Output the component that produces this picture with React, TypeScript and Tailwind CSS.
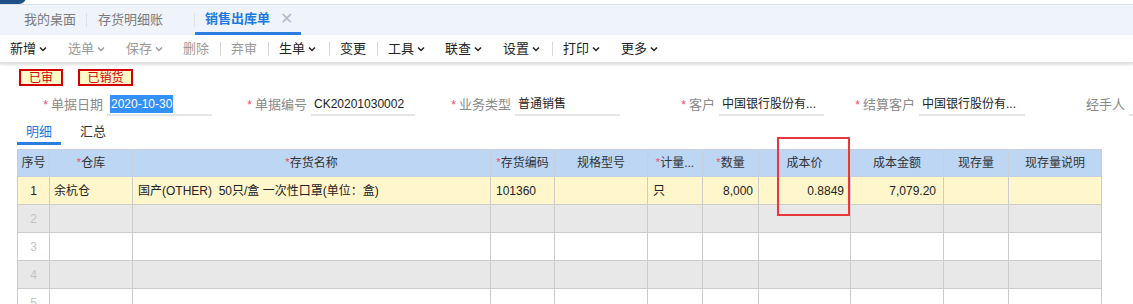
import React from 'react';

const FONT = { fontFamily: '"Liberation Sans", "Noto Sans CJK SC", sans-serif' };

const Chevron = () => (
  <svg width="8" height="6" viewBox="0 0 8 6" className="ml-[3px] mt-[1px]">
    <path d="M1 1.5 L4 4.5 L7 1.5" fill="none" stroke="currentColor" strokeWidth="1.5" />
  </svg>
);

type ToolItem = { label: string; drop?: boolean; dim?: boolean; sep?: boolean; w: string };

const tools: ToolItem[] = [
  { label: '新增', drop: true, w: 'w-[58px]' },
  { label: '选单', drop: true, dim: true, w: 'w-[58px]' },
  { label: '保存', drop: true, dim: true, w: 'w-[57px]' },
  { label: '删除', dim: true, sep: true, w: 'w-[48px]' },
  { label: '弃审', dim: true, sep: true, w: 'w-[48px]' },
  { label: '生单', drop: true, sep: true, w: 'w-[61px]' },
  { label: '变更', sep: true, w: 'w-[48px]' },
  { label: '工具', drop: true, w: 'w-[57px]' },
  { label: '联查', drop: true, w: 'w-[58px]' },
  { label: '设置', drop: true, sep: true, w: 'w-[60px]' },
  { label: '打印', drop: true, w: 'w-[58px]' },
  { label: '更多', drop: true, w: 'w-[58px]' },
];

const Field = ({ label, value, labelW, inputW, req = true, selected = false }: {
  label: string; value: string; labelW: string; inputW: string; req?: boolean; selected?: boolean;
}) => (
  <div className="flex items-center">
    <div className={`flex justify-end items-center ${labelW} text-[13px] text-[#8a8a8a]`}>
      {req && <span className="text-[#f2476b] text-[12px] mr-[3px]">*</span>}
      {label}
    </div>
    <div className={`${inputW} ml-[4px] h-[22px] border-b-2 border-[#e6e6e6] flex items-center pl-[3px] text-[12px] text-[#222] overflow-hidden whitespace-nowrap`}>
      {selected ? <span className="bg-[#3390ff] text-white px-[1px]">{value}</span> : value}
    </div>
  </div>
);

const cols = [
  { t: '序号', w: 'w-[32px]' },
  { t: '仓库', w: 'w-[83px]', req: true },
  { t: '存货名称', w: 'w-[358px]', req: true },
  { t: '存货编码', w: 'w-[64px]', req: true },
  { t: '规格型号', w: 'w-[93px]' },
  { t: '计量...', w: 'w-[55px]', req: true },
  { t: '数量', w: 'w-[56px]', req: true },
  { t: '成本价', w: 'w-[92px]' },
  { t: '成本金额', w: 'w-[93px]' },
  { t: '现存量', w: 'w-[65px]' },
  { t: '现存量说明', w: 'w-[93px]' },
];

const row1 = [
  { v: '1', a: 'text-center' },
  { v: '余杭仓', a: 'text-left pl-[4px]' },
  { v: '国产(OTHER)  50只/盒 一次性口罩(单位：盒)', a: 'text-left pl-[5px]' },
  { v: '101360', a: 'text-left pl-[5px]' },
  { v: '', a: '' },
  { v: '只', a: 'text-left pl-[5px]' },
  { v: '8,000', a: 'text-right pr-[5px]' },
  { v: '0.8849', a: 'text-right pr-[6px]' },
  { v: '7,079.20', a: 'text-right pr-[7px]' },
  { v: '', a: '' },
  { v: '', a: '' },
];

export default function App() {
  return (
    <div className="w-[1133px] h-[304px] overflow-hidden bg-white relative" style={FONT}>
      {/* logo corner */}
      <div className="h-[4px] relative">
        <div className="absolute left-[-6px] top-[-10px] w-[32px] h-[14px] rounded-full bg-[#1f4f86]" />
      </div>
      {/* tab bar */}
      <div className="h-[31px] bg-[#eff4fc] border-t border-[#dcdfe4] flex items-end pl-[14px]">
        <div className="h-[30px] flex items-center px-[10px] text-[13px] text-[#7a7a7a]">我的桌面</div>
        <div className="w-px h-[14px] bg-[#dde2ea] mb-[8px]" />
        <div className="h-[30px] flex items-center pl-[11px] text-[13px] text-[#7a7a7a]">存货明细账</div>
        <div className="w-px h-[14px] bg-[#dde2ea] mb-[8px] ml-[31px]" />
        <div className="h-[30px] flex items-center pl-[10px] pr-[8px] text-[13px] text-[#1f7ae0] border-b-[3px] border-[#2a7de1] whitespace-nowrap">
          <span className="font-bold">销售出库单</span>
          <span className="ml-[10px] text-[#b5b8be] text-[16px] font-light leading-none">✕</span>
        </div>
      </div>
      {/* toolbar */}
      <div className="h-[28px] flex items-center pl-[10px] text-[13px] shadow-[0_2px_2px_rgba(0,0,0,0.12)] border-b border-[#e2e2e2]">
        {tools.map((t) => (
          <div key={t.label} className={`flex items-center ${t.w} shrink-0`}>
            <span className={`flex items-center ${t.dim ? 'text-[#9a9a9a]' : 'text-[#222]'}`}>
              {t.label}
              {t.drop && <Chevron />}
            </span>
            {t.sep && <span className="ml-auto mr-[10px] w-px h-[14px] bg-[#d8d8d8]" />}
          </div>
        ))}
      </div>
      {/* badges */}
      <div className="flex gap-[15px] pl-[19px] pt-[6px]">
        <div className="w-[44px] h-[17px] border-2 border-[#d40000] bg-[#fffbc8] text-[#d40000] text-[12px] flex items-center justify-center leading-none">已审</div>
        <div className="w-[55px] h-[17px] border-2 border-[#d40000] bg-[#fffbc8] text-[#d40000] text-[12px] flex items-center justify-center leading-none">已销货</div>
      </div>
      {/* form row */}
      <div className="flex items-center mt-[6px] h-[26px]">
        <Field label="单据日期" value="2020-10-30" labelW="w-[103px]" inputW="w-[105px]" selected />
        <Field label="单据编号" value="CK20201030002" labelW="w-[95px]" inputW="w-[104px]" />
        <Field label="业务类型" value="普通销售" labelW="w-[96px]" inputW="w-[105px]" />
        <Field label="客户" value="中国银行股份有..." labelW="w-[95px]" inputW="w-[105px]" />
        <Field label="结算客户" value="中国银行股份有..." labelW="w-[91px]" inputW="w-[106px]" />
        <Field label="经手人" value="" labelW="w-[100px]" inputW="w-[40px]" req={false} />
      </div>
      {/* sub tabs */}
      <div className="flex pl-[17px] mt-[4px] text-[13px]">
        <div className="w-[44px] h-[23px] flex items-start justify-center text-[#1f7ae0] border-b-[3px] border-[#2a7de1]">明细</div>
        <div className="ml-[19px] h-[23px] text-[#333]">汇总</div>
      </div>
      {/* table */}
      <div className="pl-[17px] mt-[4px]">
        <table className="border-collapse table-fixed w-[1084px] text-[12px]">
          <thead>
            <tr className="h-[27px] bg-[#bcd6f4]">
              {cols.map((c) => (
                <th key={c.t} className={`${c.w} border border-[#c6cfdb] font-normal text-[#333] text-center p-0 whitespace-nowrap overflow-hidden`}>
                  {c.req && <span className="text-[#f2476b] text-[11px] align-top">*</span>}
                  {c.t}
                </th>
              ))}
            </tr>
          </thead>
          <tbody>
            <tr className="h-[28px] bg-[#fff7cb]">
              {row1.map((c, i) => (
                <td key={i} className={`border border-[#cccccc] p-0 text-[#222] whitespace-pre overflow-hidden ${c.a}`}>{c.v}</td>
              ))}
            </tr>
            {[2, 3, 4, 5].map((n) => (
              <tr key={n} className={`h-[28px] ${n % 2 === 0 ? 'bg-[#e8e8e8]' : 'bg-white'}`}>
                {cols.map((c, i) => (
                  <td key={c.t} className="border border-[#cccccc] p-0 text-center text-[#c4c4c4]">{i === 0 ? n : ''}</td>
                ))}
              </tr>
            ))}
          </tbody>
        </table>
      </div>
      {/* highlight annotation */}
      <div className="absolute left-[777px] top-[137px] w-[73px] h-[79px] border-2 border-[#e8383d] pointer-events-none" />
    </div>
  );
}
